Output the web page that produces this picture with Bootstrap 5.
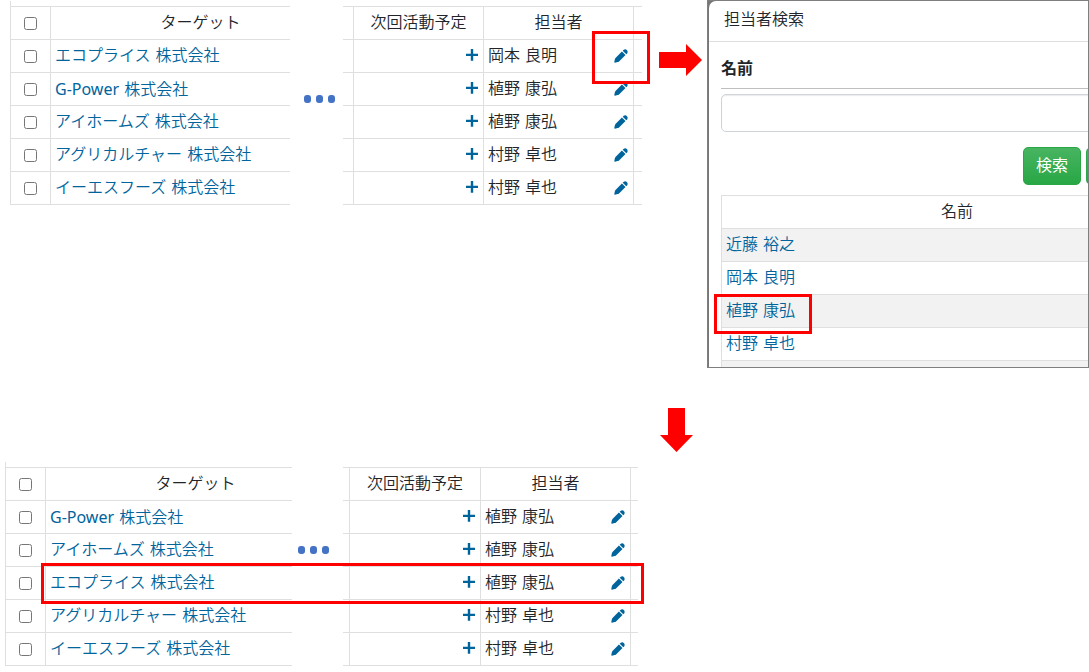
<!DOCTYPE html>
<html lang="ja">
<head>
<meta charset="utf-8">
<meta name="viewport" content="width=device-width, initial-scale=1">
<title>担当者の変更</title>
<link href="https://cdn.jsdelivr.net/npm/bootstrap@5.3.0/dist/css/bootstrap.min.css" rel="stylesheet">
<style>
  :root { --line: #dfdfdf; --link: #00649c; --callout: #f00; }
  body { font: 350 16px/24px "DejaVu Sans", "Noto Sans CJK JP", sans-serif; color: #212529; background: #fff; overflow-x: hidden; }
  a { color: var(--link); text-decoration: none; }
  svg { display: block; }
  .latin { font-family: "Noto Sans", sans-serif; font-weight: 400; }

  /* record grids */
  .grid-left { border-left: 1px solid var(--line); padding-top: 5px; }
  .grid-right { padding-top: 5px; }
  .records { border-collapse: separate; border-spacing: 0; table-layout: fixed; border-top: 1px solid var(--line); width: 100%; }
  .records th, .records td { height: 33px; padding: 0 4px; border: 0 solid var(--line); border-width: 0 1px 1px 0; font-weight: 350; white-space: nowrap; }
  .records th { text-align: center; }
  .records .edge { border-right: 0; }
  .records .pick { padding: 0; text-align: center; width: 40px; }
  .records .actions { padding-right: 5px; }
  .pick input { width: 13px; height: 13px; display: block; margin: 0 auto; }
  .grid-left .records { width: 340px; }
  .w-plan { width: 130px; }
  .w-owner { width: 150px; }
  .icon-btn { display: block; border: 0; padding: 0; background: none; color: var(--link); }
  .icon-add { margin: 0 0 2px auto; }

  .stage-top .grid-left { width: 280px; }
  .stage-top .grid-right { width: 299px; }
  .stage-bottom .grid-left { width: 287px; }
  .stage-bottom .grid-right { width: 295px; }
  .stage-bottom .w-plan { width: 131px; }
  .w-stub-top { width: 11px; }
  .w-stub-bottom { width: 7px; }

  .dots { gap: 5px; }
  .dots i { width: 7px; height: 8px; border-radius: 3px; background: #4472c4; }
  .stage-top .dots { width: 53px; padding: 95px 0 0 14px; }
  .stage-bottom .dots { width: 51px; padding: 84px 0 0 6px; }

  /* red callouts */
  .callout { position: absolute; border: 3px solid var(--callout); pointer-events: none; }
  .callout-edit { top: 30px; right: -8px; width: 58px; height: 53px; }
  .callout-name { top: -1px; left: -8px; width: 98px; height: 40px; }
  .callout-row { top: 101px; left: 36px; right: -6px; height: 41px; }
  .arrow-right { width: 65px; padding: 44px 0 0 17px; }
  .arrow-down { padding: 40px 0 10px 660px; }

  /* search dialog */
  .shot { background: #777; border: 1px solid #7f7f7f; height: 368px; min-width: 0; }
  .sheet { background: #fff; border-radius: 7px 0 0 0; margin-left: 1px; height: 100%; }
  .sheet-head { border-bottom: 1px solid var(--line); padding: 7px 15px 9px; }
  .sheet-body { padding: 0 0 0 12px; }
  .field-label { display: block; font-weight: 700; padding: 15px 0 7px; border-bottom: 1px solid #bfbfbf; margin-bottom: 5px; }
  .wide { width: calc(100% + 105px); }
  .field { height: 38px; border: 1px solid #ced4da; border-radius: 5px; box-shadow: inset 0 1px 1px rgba(0,0,0,.08); }
  .buttons { padding: 15px 0 10px; gap: 5px; margin-right: -56px; }
  .btn-search { width: 58px; height: 38px; padding: 0; color: #fff; border: 1px solid #28a745; border-radius: 5px; background: linear-gradient(#48b461, #28a745); }
  .btn-search:hover { color: #fff; background: #28a745; }
  .results { border-left: 1px solid var(--line); }
  .results tbody tr:nth-child(odd) td { background: #f2f2f2; }
</style>
</head>
<body>
<svg width="0" height="0" class="position-absolute" aria-hidden="true">
  <symbol id="plus" viewBox="0 0 12 12"><path fill="currentColor" d="M4.800 0h2.400v4.800H12v2.200H7.200v4.800H4.800V7H0V4.800h4.800z"/></symbol>
  <symbol id="pencil" viewBox="0 0 14 14"><path fill="currentColor" d="M7.900 2.500 11.500 6.100 5 12.400Q4.400 13 3.600 13.100L1 13.700Q.2 13.700.3 12.900L.8 10.400Q1 9.400 1.500 8.900zM8.700 1.700 9.800.7Q11 0 12.200.6L13.400 1.800Q14 3 13.300 4.200L12.300 5.300z"/></symbol>
</svg>

<main>
  <section class="stage-top d-flex align-items-start">
    <div class="grid-left overflow-hidden flex-shrink-0" style="margin:1px 0 0 10px">
      <table class="records">
        <thead><tr><th class="pick"><input type="checkbox" aria-label="すべて選択"></th><th>ターゲット</th></tr></thead>
        <tbody>
          <tr><td class="pick"><input type="checkbox" aria-label="エコプライス 株式会社"></td><td><a href="#">エコプライス 株式会社</a></td></tr>
          <tr><td class="pick"><input type="checkbox" aria-label="G-Power 株式会社"></td><td><a href="#"><span class="latin">G-Power</span> 株式会社</a></td></tr>
          <tr><td class="pick"><input type="checkbox" aria-label="アイホームズ 株式会社"></td><td><a href="#">アイホームズ 株式会社</a></td></tr>
          <tr><td class="pick"><input type="checkbox" aria-label="アグリカルチャー 株式会社"></td><td><a href="#">アグリカルチャー 株式会社</a></td></tr>
          <tr><td class="pick"><input type="checkbox" aria-label="イーエスフーズ 株式会社"></td><td><a href="#">イーエスフーズ 株式会社</a></td></tr>
        </tbody>
      </table>
    </div>
    <div class="dots d-flex flex-shrink-0"><i></i><i></i><i></i></div>
    <div class="grid-right position-relative flex-shrink-0" style="margin-top:1px">
      <table class="records">
        <thead><tr><th class="w-stub-top p-0"></th><th class="w-plan">次回活動予定</th><th class="w-owner">担当者</th><th class="edge p-0"></th></tr></thead>
        <tbody>
          <tr><td class="p-0"></td><td class="actions"><button class="icon-btn icon-add" aria-label="追加"><svg width="12" height="12"><use href="#plus"/></svg></button></td><td class="actions"><div class="d-flex justify-content-between align-items-center">岡本 良明<button class="icon-btn" aria-label="編集"><svg width="14" height="14"><use href="#pencil"/></svg></button></div></td><td class="edge p-0"></td></tr>
          <tr><td class="p-0"></td><td class="actions"><button class="icon-btn icon-add" aria-label="追加"><svg width="12" height="12"><use href="#plus"/></svg></button></td><td class="actions"><div class="d-flex justify-content-between align-items-center">植野 康弘<button class="icon-btn" aria-label="編集"><svg width="14" height="14"><use href="#pencil"/></svg></button></div></td><td class="edge p-0"></td></tr>
          <tr><td class="p-0"></td><td class="actions"><button class="icon-btn icon-add" aria-label="追加"><svg width="12" height="12"><use href="#plus"/></svg></button></td><td class="actions"><div class="d-flex justify-content-between align-items-center">植野 康弘<button class="icon-btn" aria-label="編集"><svg width="14" height="14"><use href="#pencil"/></svg></button></div></td><td class="edge p-0"></td></tr>
          <tr><td class="p-0"></td><td class="actions"><button class="icon-btn icon-add" aria-label="追加"><svg width="12" height="12"><use href="#plus"/></svg></button></td><td class="actions"><div class="d-flex justify-content-between align-items-center">村野 卓也<button class="icon-btn" aria-label="編集"><svg width="14" height="14"><use href="#pencil"/></svg></button></div></td><td class="edge p-0"></td></tr>
          <tr><td class="p-0"></td><td class="actions"><button class="icon-btn icon-add" aria-label="追加"><svg width="12" height="12"><use href="#plus"/></svg></button></td><td class="actions"><div class="d-flex justify-content-between align-items-center">村野 卓也<button class="icon-btn" aria-label="編集"><svg width="14" height="14"><use href="#pencil"/></svg></button></div></td><td class="edge p-0"></td></tr>
        </tbody>
      </table>
      <div class="callout callout-edit"></div>
    </div>
    <div class="arrow-right flex-shrink-0"><svg width="43" height="32" aria-hidden="true"><path fill="#f00" d="M0 8h27V0l16 16-16 16v-8H0z"/></svg></div>

    <div class="shot flex-grow-1 overflow-hidden">
      <div class="sheet">
        <div class="sheet-head">担当者検索</div>
        <div class="sheet-body">
          <label class="field-label" for="name">名前</label>
          <input id="name" type="text" class="form-control field wide">
          <div class="buttons d-flex justify-content-end">
            <button class="btn btn-search">検索</button>
            <button class="btn btn-search" aria-label="クリア"></button>
          </div>
          <div class="results wide">
            <table class="records">
              <thead><tr><th>名前</th></tr></thead>
              <tbody>
                <tr><td><a href="#">近藤 裕之</a></td></tr>
                <tr><td><a href="#">岡本 良明</a></td></tr>
                <tr><td class="position-relative"><a href="#">植野 康弘</a><div class="callout callout-name"></div></td></tr>
                <tr><td><a href="#">村野 卓也</a></td></tr>
                <tr><td></td></tr>
              </tbody>
            </table>
          </div>
        </div>
      </div>
    </div>
  </section>

  <div class="arrow-down"><svg width="34" height="44" aria-hidden="true"><path fill="#f00" d="M8 0h17v27h8L16.500 44 0 27h8z"/></svg></div>

  <section class="stage-bottom d-flex align-items-start">
    <div class="d-flex align-items-start position-relative" style="margin-left:5px">
      <div class="grid-left overflow-hidden flex-shrink-0">
        <table class="records">
          <thead><tr><th class="pick"><input type="checkbox" aria-label="すべて選択"></th><th>ターゲット</th></tr></thead>
          <tbody>
            <tr><td class="pick"><input type="checkbox" aria-label="G-Power 株式会社"></td><td><a href="#"><span class="latin">G-Power</span> 株式会社</a></td></tr>
            <tr><td class="pick"><input type="checkbox" aria-label="アイホームズ 株式会社"></td><td><a href="#">アイホームズ 株式会社</a></td></tr>
            <tr><td class="pick"><input type="checkbox" aria-label="エコプライス 株式会社"></td><td><a href="#">エコプライス 株式会社</a></td></tr>
            <tr><td class="pick"><input type="checkbox" aria-label="アグリカルチャー 株式会社"></td><td><a href="#">アグリカルチャー 株式会社</a></td></tr>
            <tr><td class="pick"><input type="checkbox" aria-label="イーエスフーズ 株式会社"></td><td><a href="#">イーエスフーズ 株式会社</a></td></tr>
          </tbody>
        </table>
      </div>
      <div class="dots d-flex flex-shrink-0"><i></i><i></i><i></i></div>
      <div class="grid-right flex-shrink-0">
        <table class="records">
          <thead><tr><th class="w-stub-bottom p-0"></th><th class="w-plan">次回活動予定</th><th class="w-owner">担当者</th><th class="edge p-0"></th></tr></thead>
          <tbody>
            <tr><td class="p-0"></td><td class="actions"><button class="icon-btn icon-add" aria-label="追加"><svg width="12" height="12"><use href="#plus"/></svg></button></td><td class="actions"><div class="d-flex justify-content-between align-items-center">植野 康弘<button class="icon-btn" aria-label="編集"><svg width="14" height="14"><use href="#pencil"/></svg></button></div></td><td class="edge p-0"></td></tr>
            <tr><td class="p-0"></td><td class="actions"><button class="icon-btn icon-add" aria-label="追加"><svg width="12" height="12"><use href="#plus"/></svg></button></td><td class="actions"><div class="d-flex justify-content-between align-items-center">植野 康弘<button class="icon-btn" aria-label="編集"><svg width="14" height="14"><use href="#pencil"/></svg></button></div></td><td class="edge p-0"></td></tr>
            <tr><td class="p-0"></td><td class="actions"><button class="icon-btn icon-add" aria-label="追加"><svg width="12" height="12"><use href="#plus"/></svg></button></td><td class="actions"><div class="d-flex justify-content-between align-items-center">植野 康弘<button class="icon-btn" aria-label="編集"><svg width="14" height="14"><use href="#pencil"/></svg></button></div></td><td class="edge p-0"></td></tr>
            <tr><td class="p-0"></td><td class="actions"><button class="icon-btn icon-add" aria-label="追加"><svg width="12" height="12"><use href="#plus"/></svg></button></td><td class="actions"><div class="d-flex justify-content-between align-items-center">村野 卓也<button class="icon-btn" aria-label="編集"><svg width="14" height="14"><use href="#pencil"/></svg></button></div></td><td class="edge p-0"></td></tr>
            <tr><td class="p-0"></td><td class="actions"><button class="icon-btn icon-add" aria-label="追加"><svg width="12" height="12"><use href="#plus"/></svg></button></td><td class="actions"><div class="d-flex justify-content-between align-items-center">村野 卓也<button class="icon-btn" aria-label="編集"><svg width="14" height="14"><use href="#pencil"/></svg></button></div></td><td class="edge p-0"></td></tr>
          </tbody>
        </table>
      </div>
      <div class="callout callout-row"></div>
    </div>
  </section>
</main>
<script src="https://cdn.jsdelivr.net/npm/bootstrap@5.3.0/dist/js/bootstrap.bundle.min.js"></script>
</body>
</html>
